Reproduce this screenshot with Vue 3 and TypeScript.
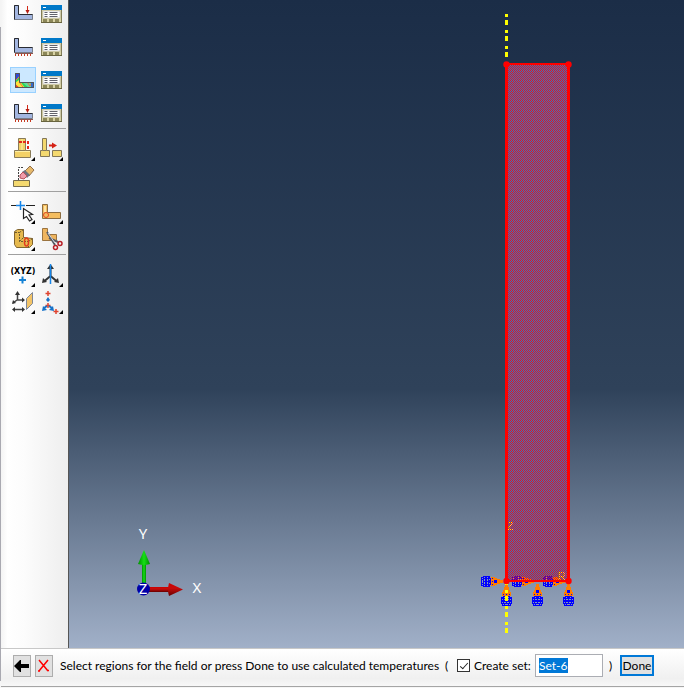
<script setup lang="ts">
import { onMounted, ref } from 'vue'

interface Tool { id: string; label: string; more?: boolean; active?: boolean }

const groups: Tool[][] = [
  [
    { id: 'load', label: 'Create load' },
    { id: 'manager', label: 'Load manager' },
    { id: 'bc', label: 'Create boundary condition' },
    { id: 'manager', label: 'Boundary condition manager' },
    { id: 'field', label: 'Create predefined field', active: true },
    { id: 'manager', label: 'Predefined field manager' },
    { id: 'case', label: 'Create load case' },
    { id: 'manager', label: 'Load case manager' },
  ],
  [
    { id: 'feature', label: 'Create feature', more: true },
    { id: 'move', label: 'Edit feature', more: true },
    { id: 'erase', label: 'Delete feature' },
  ],
  [
    { id: 'pick', label: 'Partition edge', more: true },
    { id: 'face', label: 'Partition face', more: true },
    { id: 'cell', label: 'Partition cell', more: true },
    { id: 'cut', label: 'Virtual topology' },
  ],
  [
    { id: 'point', label: 'Create datum point', more: true },
    { id: 'axis', label: 'Create datum axis', more: true },
    { id: 'plane', label: 'Create datum plane', more: true },
    { id: 'csys', label: 'Create datum coordinate system', more: true },
  ],
]

const supports = [506, 537, 568]
const setName = ref('Set-6')
const createSet = ref(true)
const nameBox = ref<HTMLInputElement | null>(null)

onMounted(() => {
  nameBox.value?.focus()
  nameBox.value?.select()
})
</script>

<template>
  <div class="app">
    <div class="work">
      <nav class="tools" aria-label="Toolbox">
        <div v-for="(group, g) in groups" :key="g" class="group" :class="{ roomy: g === 0 }">
          <button
            v-for="(tool, i) in group"
            :key="i"
            type="button"
            class="tool"
            :class="{ active: tool.active }"
            :aria-label="tool.label"
          >
            <svg viewBox="0 0 26 26" width="26" height="26" aria-hidden="true">
              <g v-if="tool.id === 'manager'">
                <rect x="3" y="4" width="21" height="5" fill="#0078c8" />
                <path d="M5 6.500h3" stroke="#fff" />
                <rect x="3" y="9" width="21" height="13" fill="#d8d2a4" />
                <path d="M3.500 9v13M23.500 9v13" stroke="#827d58" />
                <rect x="5" y="10" width="17" height="7" fill="#fff" stroke="#aaa" stroke-width=".5" />
                <path d="M6.500 11.500h3m2 0h8M6.500 13.500h3m2 0h8M6.500 15.500h3m2 0h8" stroke="#62626c" />
                <path d="M3 21.500h21" stroke="#68643e" />
                <path d="M5 18h4v3h-4zM11 18h4v3h-4zM17 18h4v3h-4z" fill="#8c8759" />
              </g>
              <g v-else-if="tool.id === 'load' || tool.id === 'bc' || tool.id === 'case'">
                <path d="M4.500 4.500h4v9h14v5h-18z" fill="#a3b6e0" stroke="#777d89" />
                <path d="M4.500 18.500v-14h4v9h14" fill="none" stroke="#292b32" />
                <path v-if="tool.id !== 'bc'" d="M17.500 5v7" stroke="#d32a18" />
                <path v-if="tool.id !== 'bc'" d="M15.500 9h4l-2 4z" fill="#b51c12" />
                <path v-if="tool.id !== 'load'" d="M5 19.500h18" stroke="#8a5450" />
                <path v-if="tool.id !== 'load'" d="M5.500 20v2M8.500 20v2M11.500 20v2M14.500 20v2M17.500 20v2M20.500 20v2" stroke="#c83a20" />
              </g>
              <g v-else-if="tool.id === 'field'">
                <path d="M5 6h5v9h14v6H5z" fill="#27d85b" />
                <path d="M5 6h5v2l-5 6z" fill="#3248d9" />
                <path d="M5 16l4-3 6 8h-7z" fill="#ffe13a" />
                <path d="M5 17l5 4H5z" fill="#ee3825" />
                <path d="M12 15h12v6h-5z" fill="#5fdc9a" />
                <path d="M17 15l3 4 2-4M6 13l4-4M9 15l4 5" fill="none" stroke="#f16b3a" />
                <path d="M21 15h3v6h-3z" fill="#3469ca" />
                <path d="M5.500 6.500h4v9h14v5h-18z" fill="none" stroke="#555" />
              </g>
              <g v-else-if="tool.id === 'feature'">
                <path d="M8.500 2.500h7v12h5v7h-16v-7h4z" fill="#f3d167" stroke="#897b58" />
                <path d="M5 15.500h15M12 3v11" stroke="#fff0a4" />
                <path d="M8.500 14.500h7" stroke="#897b58" />
                <path d="M9 6h7" stroke="#e32819" stroke-width="2" stroke-dasharray="3 1" />
                <path d="M18 5v9" stroke="#e32819" stroke-width="2" stroke-dasharray="3 2" />
              </g>
              <g v-else-if="tool.id === 'move'">
                <path d="M4.500 2.500h4v12h3v6h-9v-6h2zM14.500 14.500h9v6h-9z" fill="#f4d96f" stroke="#827758" />
                <path d="M4.500 14.500h4" stroke="#827758" />
                <path d="M11 9.500h4" stroke="#d52216" stroke-width="2" />
                <path d="M14 6.500l5 3-5 3z" fill="#d52216" />
              </g>
              <g v-else-if="tool.id === 'erase'">
                <path d="M3.500 17.500h16v6h-16z" fill="#f4d96f" stroke="#766d4f" />
                <path d="M8.500 17V4.500H14" fill="none" stroke="#444" stroke-dasharray="2 1" />
                <path d="M15 8l5-5 4 4-5 6z" fill="#e6b96b" stroke="#916f4a" />
                <path d="M12 9l3-2 5 5-3 3z" fill="#6e737e" />
                <path d="M10 12l3-3 4 4-3 3-4-1z" fill="#ef9caa" stroke="#b8525b" />
              </g>
              <g v-else-if="tool.id === 'pick'">
                <path d="M1 6.500h5M16 6.500h9" stroke="#222" />
                <path d="M6 6.500h9M10.500 2v9" stroke="#1685e8" stroke-width="1.500" />
                <path d="M13.500 9.500v10l3-2 3 4.500 2.500-1.500-3-4.500 3.500-.5z" fill="#fff" stroke="#222" stroke-width="1.200" />
              </g>
              <g v-else-if="tool.id === 'face'">
                <path d="M4.500 5.500h5v8h13v6h-18z" fill="#f4bd5f" stroke="#8c6d40" />
                <path d="M6 7h2v6H6z" fill="#ffe7a6" />
                <circle cx="8" cy="16" r="2.500" fill="none" stroke="#e34821" />
              </g>
              <g v-else-if="tool.id === 'cell'">
                <path d="M4.500 5.500l3-2h6v8l9 1v6l-3 3h-13l-2-3z" fill="#e6b94e" stroke="#80642f" />
                <path d="M5 6.500h4.500v9h9v6M9.500 6.500l4-3M9.500 15.500l4-4M18.500 15.500l4-3" fill="none" stroke="#6c592e" stroke-dasharray="2 1" />
                <ellipse cx="16.500" cy="16" rx="2" ry="4" fill="none" stroke="#e33b1e" stroke-width="1.500" />
              </g>
              <g v-else-if="tool.id === 'cut'">
                <path d="M4.500 2.500h5v6h9v6h-14z" fill="#efb55e" stroke="#9b7440" />
                <path d="M9 6l8 13M11 12l9 4" stroke="#555962" stroke-width="2" />
                <path d="M10 7l7 10" stroke="#d6dae0" />
                <circle cx="17.500" cy="21.500" r="2" fill="none" stroke="#b82028" stroke-width="1.500" />
                <circle cx="22" cy="17.500" r="2" fill="none" stroke="#b82028" stroke-width="1.500" />
              </g>
              <g v-else-if="tool.id === 'point'">
                <text x="13" y="12" text-anchor="middle" class="xyz">(XYZ)</text>
                <path d="M9 18h7M12.500 14.500v7" stroke="#1582d5" stroke-width="2" />
              </g>
              <g v-else-if="tool.id === 'axis'">
                <path d="M12.500 14l-6 5M12.500 14l6 5M12.500 4v10" stroke="#333" stroke-width="2" />
                <path d="M4 21l1-5 4 4zM21 21l-1-5-4 4zM9 7l3.500-5L16 7z" fill="#333" />
                <path d="M12.500 2v20" stroke="#1685e8" stroke-width="1.500" />
              </g>
              <g v-else-if="tool.id === 'plane'">
                <path d="M7.500 5v6h6M7 11l-4 3M4 20.500h9" fill="none" stroke="#444" stroke-width="1.500" />
                <path d="M5 6l2.500-4L10 6zM12 8.500l3 2.500-3 2.500zM2 15l1-4 3 3zM5 18l-3 2.500L5 23zM12 18l3 2.500-3 2.500z" fill="#333" />
                <path d="M16.500 9.500l6-6v11l-6 6z" fill="#f3c468" stroke="#7f8797" />
              </g>
              <g v-else>
                <path d="M10 2v5M7.500 4.500h5M10 14v5M7.500 16.500h5M18 20v5M15.500 22.500h5" stroke="#de4430" stroke-width="1.500" />
                <path d="M8 11l2-3 2 3-2 2zM4 22l1-5 4 4zM16 22l-1-5-4 4z" fill="#1672c8" />
                <path d="M6 19l3-2M14 19l-3-2" stroke="#1672c8" stroke-width="2" />
              </g>
              <path v-if="tool.more" d="M25 21v4h-4z" fill="#000" />
            </svg>
          </button>
        </div>
      </nav>

      <main class="viewport">
        <svg class="scene" viewBox="69 0 615 648" preserveAspectRatio="xMinYMin meet" role="img" aria-label="Part with boundary conditions">
          <defs>
            <pattern id="mesh" width="2" height="2" patternUnits="userSpaceOnUse">
              <path d="M0 0h1v1h-1zM1 1h1v1h-1z" fill="#e4141c" shape-rendering="crispEdges" />
            </pattern>
            <linearGradient id="green"><stop stop-color="#009000" /><stop offset=".5" stop-color="#16df16" /><stop offset="1" stop-color="#008c00" /></linearGradient>
            <linearGradient id="red" x2="0" y2="1"><stop stop-color="#c00" /><stop offset=".4" stop-color="#c80c0c" /><stop offset="1" stop-color="#600" /></linearGradient>
            <g id="support" shape-rendering="crispEdges">
              <path d="M-1 3h3v3h1v3h1v2h1v4h-9v-4h1v-2h1v-3h1z" fill="#ff7d00" />
              <path d="M-1 9h3v3h-3zM-3 13h1v1h-1zM3 13h1v1h-1zM0 13h1v1h-1z" fill="#00f" />
              <path d="M-3 15h7v1h2v7h-1v2h-9v-2h-1v-7h2z" fill="#00f" />
              <path d="M-2 16h1v1h-1zM2 16h1v1h-1zM-4 18h1v1h-1zM-2 18h2v1h-2zM1 18h2v1h-2zM4 18h1v1h-1zM-4 21h1v1h-1zM-2 21h2v1h-2zM1 21h2v1h-2zM4 21h1v1h-1zM-3 23h1v1h-1zM-1 23h3v1h-3zM3 23h1v1h-1z" fill="#8998b1" />
            </g>
          </defs>

          <rect x="506" y="64" width="62" height="517" fill="#3c70c0" />
          <g v-for="x in supports" :key="x">
            <use href="#support" :transform="`translate(${x} 581)`" />
            <use href="#support" :transform="`translate(${x} 581) rotate(90)`" />
          </g>
          <text x="507" y="530" class="mark">Z</text>
          <text x="558" y="580" class="mark">R</text>
          <path d="M506.500 14V633" stroke="#ff0" stroke-width="3" stroke-dasharray="3 3 5 5" shape-rendering="crispEdges" />
          <rect x="507" y="64" width="61" height="517" fill="url(#mesh)" />
          <path d="M505 63h65v519h-65zM508 65v515h59V65z" fill="#f00" fill-rule="evenodd" shape-rendering="crispEdges" />
          <g fill="#f00">
            <circle cx="506.500" cy="64.500" r="3.200" /><circle cx="568.500" cy="64.500" r="3.200" />
            <circle cx="506.500" cy="581" r="3.200" /><circle cx="568.500" cy="581" r="3.200" />
          </g>

          <rect x="142" y="563" width="4" height="24" fill="url(#green)" />
          <path d="M138 564l6-14 6 14q-6 2-12 0z" fill="url(#green)" />
          <rect x="147" y="587" width="24" height="5" fill="url(#red)" />
          <path d="M169 583l14 6.500-14 6.500q-2-6.500 0-13z" fill="url(#red)" />
          <circle cx="143.500" cy="589" r="6.500" fill="#0000a8" />
          <text x="143" y="539" class="axis">Y</text>
          <text x="197" y="593" class="axis">X</text>
          <text x="143" y="594" class="axis">Z</text>
        </svg>
      </main>
    </div>

    <form class="prompt" @submit.prevent>
      <button type="button" class="step" aria-label="Back">
        <svg viewBox="0 0 18 22" width="18" height="22" aria-hidden="true"><path d="M1 11l6-6h1v4h8v4H8v4H7z" fill="#000" /></svg>
      </button>
      <button type="button" class="step" aria-label="Cancel">
        <svg viewBox="0 0 18 22" width="18" height="22" aria-hidden="true"><path d="M4 5l9 11M13 5L4 16M3 16h2M12 15.500h2" fill="none" stroke="#f00" stroke-width="1.500" /></svg>
      </button>
      <span class="message">Select regions for the field or press Done to use calculated temperatures</span>
      <span class="open">(</span>
      <label class="check"><input v-model="createSet" type="checkbox" /><span>Create set:</span></label>
      <input ref="nameBox" v-model="setName" class="name" type="text" aria-label="Set name" />
      <span class="close">)</span>
      <button type="submit" class="done">Done</button>
    </form>
  </div>
</template>

<style>
body {
  margin: 0;
}
</style>

<style scoped>
.app {
  box-sizing: border-box;
  display: flex;
  flex-direction: column;
  height: 100vh;
  padding: 0 0 1px 1px;
  background: linear-gradient(#f4f4f4 27px, #a9a9b1 27px) no-repeat 0 0 / 1px calc(100% - 7px), #f6f6f6;
  font-family: Lato, "Open Sans", sans-serif;
  font-size: 12px;
  color: #000;
}
.work {
  display: flex;
  flex: 1;
  min-height: 0;
}
.tools {
  box-sizing: border-box;
  flex: none;
  width: 67px;
  padding: 1px 2px 0 7px;
  background: linear-gradient(90deg, #f4f4f4, #fff 10%, #fcfcfc 35%, #eee);
}
.group {
  display: grid;
  grid-template-columns: 26px 26px;
  gap: 1px 2px;
  padding: 7px 2px 2px;
  border-bottom: 1px solid #a0a0a0;
}
.roomy {
  row-gap: 7px;
  padding-top: 0;
}
.group:last-child {
  border-bottom: 0;
}
.tool {
  padding: 0;
  border: 0;
  background: none;
  height: 26px;
}
.tool svg,
.step svg {
  display: block;
}
.active {
  background: #cce8ff;
  box-shadow: inset 0 0 0 1px #99d1ff;
}
.xyz {
  font: bold 8px "DejaVu Sans", sans-serif;
}
.viewport {
  flex: 1;
  min-width: 0;
  border-left: 1px solid #555;
  background: linear-gradient(#1b2d47, #2f425a 60%, #a1b0c8);
  overflow: hidden;
}
.scene {
  display: block;
  width: 100%;
}
.axis {
  font: 15px "Noto Sans", sans-serif;
  fill: #fff;
  text-anchor: middle;
}
.mark {
  font: 10px "Liberation Sans", sans-serif;
  fill: #ff0;
}
.prompt {
  box-sizing: border-box;
  display: flex;
  align-items: center;
  height: 39px;
  padding: 0 8px 4px 12px;
  border-top: 1px solid #c8c8c8;
  border-bottom: 1px solid #a5a5a5;
  background: linear-gradient(#fff, #f0f0f0 80%, #f8f8f8);
  white-space: nowrap;
}
.step {
  box-sizing: border-box;
  width: 18px;
  height: 22px;
  margin-right: 4px;
  padding: 0;
  border: 0;
  background: #e1e1e1;
  box-shadow: inset 0 0 0 1px #adadad;
}
.message {
  width: 377px;
  margin-left: 3px;
}
.open {
  margin-left: 8px;
  width: 12px;
}
.check {
  display: flex;
  align-items: center;
  gap: 4px;
  width: 78px;
}
.check input {
  appearance: none;
  box-sizing: border-box;
  width: 13px;
  height: 13px;
  margin: 0;
  border: 1px solid #333;
  background: #fff;
}
.check input:checked {
  display: grid;
  place-items: center;
}
.check input:checked::before {
  content: "";
  width: 7px;
  height: 3px;
  border: solid #222;
  border-width: 0 0 1px 1px;
  transform: translateY(-1px) rotate(-48deg);
}
.name {
  box-sizing: border-box;
  width: 68px;
  height: 23px;
  padding: 0 3px;
  border: 1px solid #abadb3;
  outline: 0;
  background: #fff;
  font: inherit;
}
.name::selection {
  background: #0078d7;
  color: #fff;
}
.close {
  width: 11px;
  margin-left: 6px;
}
.done {
  box-sizing: border-box;
  width: 34px;
  height: 21px;
  padding: 0;
  border: 2px solid #0078d7;
  background: #e1e1e1;
  font: inherit;
  line-height: 16px;
}
</style>
